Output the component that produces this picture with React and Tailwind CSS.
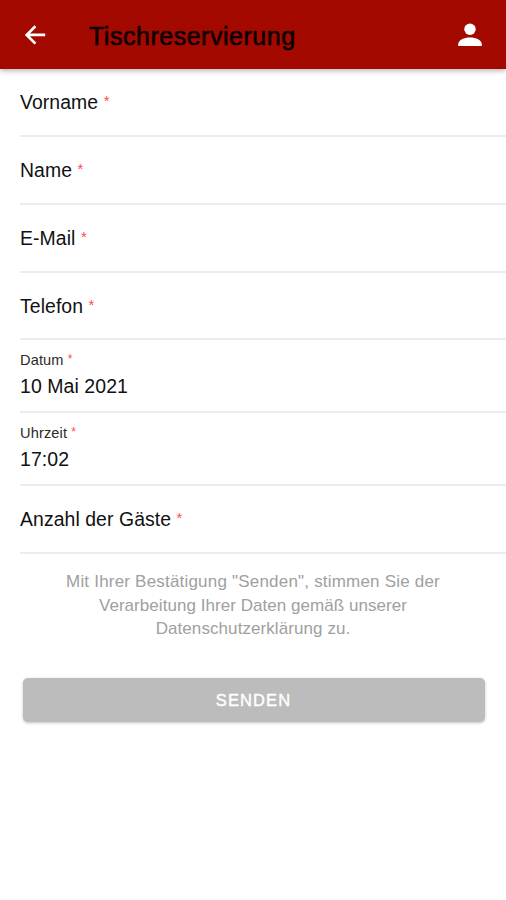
import React from "react";

const fields = [
  { label: "Vorname" },
  { label: "Name" },
  { label: "E-Mail" },
  { label: "Telefon" },
  { label: "Datum", value: "10 Mai 2021" },
  { label: "Uhrzeit", value: "17:02" },
  { label: "Anzahl der Gäste" },
];

const Header = () => {
  return (
    <header className="relative flex h-[69px] items-center bg-[#a40900] pl-[23px] pr-[23px] pt-[1px] text-white shadow-[0_2px_5px_rgba(0,0,0,0.28)]">
      <button className="shrink-0" aria-label="Zurück">
        <svg width="24" height="24" viewBox="0 0 24 24" fill="none" stroke="currentColor" strokeWidth="2.7">
          <path d="M12.4 3.2 3.7 11.9l8.7 8.7M3.7 11.9H22.2" />
        </svg>
      </button>
      <h1 className="ml-[42px] mt-[2px] flex-1 text-[25px] leading-[30px] font-normal tracking-[0.52px] text-[#0c0000] [-webkit-text-stroke:0.6px_#0c0000]">
        Tischreservierung
      </h1>
      <button className="shrink-0" aria-label="Profil">
        <svg width="26" height="26" viewBox="0 0 26 26" fill="currentColor">
          <circle cx="13" cy="7.3" r="5.7" />
          <path d="M1.2 24v-1.8C1.2 18.2 7 15.6 13 15.6s11.8 2.6 11.8 6.6V24z" />
        </svg>
      </button>
    </header>
  );
};

const Field = ({ label, value }) => {
  if (value) {
    return (
      <div className="h-[72.8px] border-b-2 border-[#ececec] pt-[9.5px]">
        <p className="text-[14.6px] leading-[20px] tracking-[0.12px] text-[#2a2a2a]">
          {label} <span className="align-[2px] text-[12px] leading-none text-[#ff4a4a]">*</span>
        </p>
        <p className="mt-[3px] text-[19.5px] leading-[26px] tracking-[0.06px]">{value}</p>
      </div>
    );
  }

  return (
    <div className="flex h-[67.7px] items-center border-b-2 border-[#ececec]">
      <p className="text-[19.4px] leading-[26px] tracking-[0.08px]">
        {label} <span className="align-[3px] text-[15px] leading-none text-[#ff4a4a]">*</span>
      </p>
    </div>
  );
};

const App = () => {
  return (
    <div className="h-[900px] w-full overflow-hidden bg-white font-['Liberation_Sans',Arial,sans-serif] text-[#111]">
      <Header />

      <main>
        <div className="pl-5 pt-[0.6px]">
          {fields.map((field) => (
            <Field key={field.label} label={field.label} value={field.value} />
          ))}
        </div>

        <p className="mt-[16.5px] text-center text-[17px] leading-[23.6px] text-[#a0a0a0]">
          <span className="tracking-[0.2px]">Mit Ihrer Bestätigung "Senden", stimmen Sie der</span>
          <br />
          <span className="tracking-[0.05px]">Verarbeitung Ihrer Daten gemäß unserer</span>
          <br />
          <span className="tracking-[0.08px]">Datenschutzerklärung zu.</span>
        </p>

        <button className="mx-[22.5px] mt-[37px] block h-[44px] w-[462px] rounded-[5px] bg-[#bcbcbc] text-[16.5px] tracking-[1.1px] text-white shadow-[0_1px_3px_rgba(0,0,0,0.25)] [-webkit-text-stroke:0.4px_#fff]">
          SENDEN
        </button>
      </main>
    </div>
  );
};

export default App;
